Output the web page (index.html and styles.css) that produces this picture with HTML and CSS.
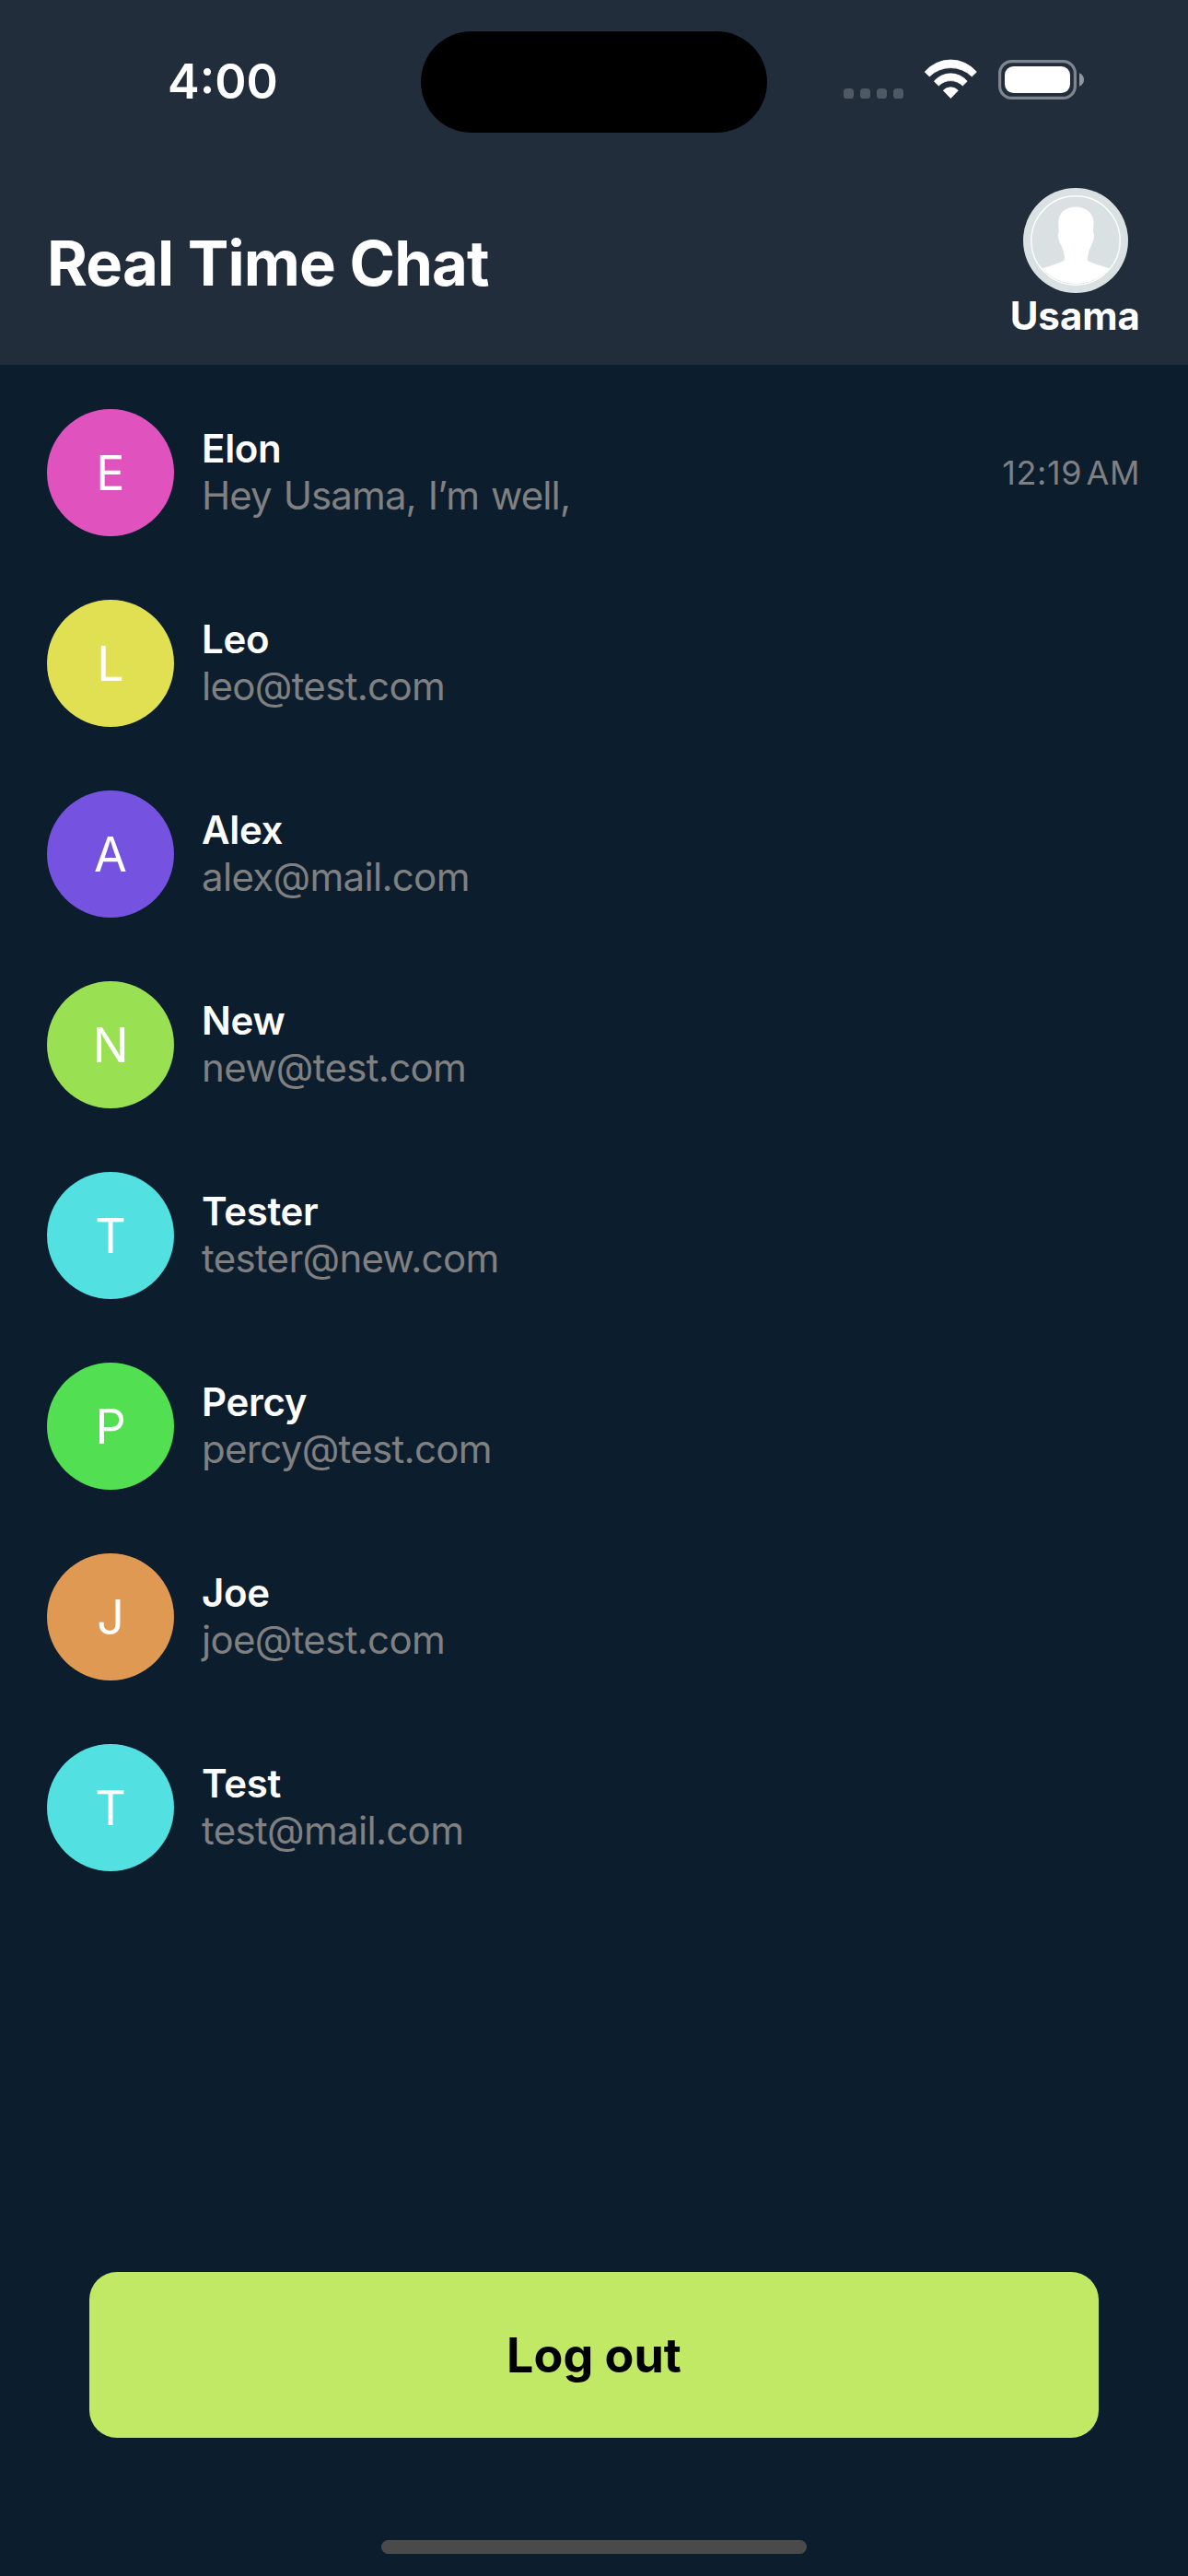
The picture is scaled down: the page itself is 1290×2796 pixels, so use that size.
FILE: index.html
```html
<!DOCTYPE html>
<html lang="en">
<head>
<meta charset="utf-8">
<title>Real Time Chat</title>
<link rel="stylesheet" href="styles.css">
</head>
<body>
<div class="screen">
  <header class="header">
    <div class="status">
      <span class="clock">4:00</span>
      <div class="island"></div>
      <div class="indicators">
        <svg class="signal" width="65" height="44" viewBox="0 0 65 44">
          <rect x="0" y="32" width="11" height="11" rx="3.6"/>
          <rect x="18" y="32" width="11" height="11" rx="3.6"/>
          <rect x="36" y="32" width="11" height="11" rx="3.6"/>
          <rect x="54" y="32" width="11" height="11" rx="3.6"/>
        </svg>
        <svg class="wifi" width="59" height="44" viewBox="0 0 59 44">
          <path d="M1.2 14.1A36.8 36.8 0 0 1 57.4 14.1L52.3 18.9A33 33 0 0 0 6.3 18.9Z"/>
          <path d="M11.4 24.2A23.4 23.4 0 0 1 47.2 24.2L42.3 29A18.4 18.4 0 0 0 16.3 29Z"/>
          <path d="M21.3 34.2A11 11 0 0 1 37.3 34.2L29.3 42.5Z"/>
        </svg>
        <svg class="battery" width="94" height="44" viewBox="0 0 94 44">
          <rect class="battery-case" x="1.6" y="2.6" width="81.8" height="39.8" rx="13"/>
          <path class="battery-cap" d="M88 15.3Q93 17.5 93 22.5T88 29.7Z"/>
          <rect class="battery-level" x="7" y="8" width="71" height="29" rx="9.5"/>
        </svg>
      </div>
    </div>
    <div class="toolbar">
      <h1 class="title">Real Time Chat</h1>
      <div class="profile">
        <svg class="portrait" width="114" height="114" viewBox="0 0 114 114">
          <circle class="portrait-bg" cx="57" cy="57" r="57"/>
          <circle class="portrait-ring" cx="57" cy="57" r="48.2"/>
          <path class="portrait-figure" d="M57.3 20.4C66 20.4 76.2 25.5 76.5 37C76.6 42 75.8 45.5 76.3 48.5C77.3 50.5 76.8 56 75.6 59C74 63.5 72.5 64.5 71 71C70 75 68.8 78.5 71.5 79.7C78 82.6 86 84.8 93.8 87.3A48.5 48.5 0 0 1 20.7 87.3C28.5 84.8 36 82.5 42.5 79.7C46 78.3 45 75 44.2 71C43 65 41 62.5 39.5 58.5C38 55 37.3 50.5 38.5 48.5C39 45.5 38 42 38.2 37C38.6 25.5 48 20.4 57.3 20.4Z"/>
        </svg>
        <span class="username">Usama</span>
      </div>
    </div>
  </header>

  <main class="chats">
    <div class="chat"><div class="avatar pink">E</div><div class="info"><div class="name">Elon</div><div class="detail message">Hey Usama, I’m well,</div></div><time class="time">12:19 AM</time></div>
    <div class="chat"><div class="avatar yellow">L</div><div class="info"><div class="name">Leo</div><div class="detail">leo@test.com</div></div></div>
    <div class="chat"><div class="avatar purple">A</div><div class="info"><div class="name">Alex</div><div class="detail">alex@mail.com</div></div></div>
    <div class="chat"><div class="avatar lime">N</div><div class="info"><div class="name">New</div><div class="detail">new@test.com</div></div></div>
    <div class="chat"><div class="avatar cyan">T</div><div class="info"><div class="name">Tester</div><div class="detail">tester@new.com</div></div></div>
    <div class="chat"><div class="avatar green">P</div><div class="info"><div class="name">Percy</div><div class="detail">percy@test.com</div></div></div>
    <div class="chat"><div class="avatar orange">J</div><div class="info"><div class="name">Joe</div><div class="detail">joe@test.com</div></div></div>
    <div class="chat"><div class="avatar cyan">T</div><div class="info"><div class="name">Test</div><div class="detail">test@mail.com</div></div></div>
  </main>

  <footer class="footer">
    <button class="logout">Log out</button>
    <div class="home-bar"></div>
  </footer>
</div>
</body>
</html>
```
FILE: styles.css
```css
* { box-sizing: border-box; }

body {
  margin: 0;
  background: #0c1d2e;
  color: #fff;
  font-family: Inter, "Liberation Sans", sans-serif;
}

.screen {
  display: flex;
  flex-direction: column;
  width: 1290px;
  height: 2796px;
}

.header {
  height: 396px;
  background: #222d3b;
}

.status {
  display: grid;
  grid-template-columns: 457px 376px 457px;
  align-items: center;
  height: 177px;
}

.clock {
  padding-left: 182px;
  font-size: 52px;
  font-weight: 600;
  line-height: 63px;
}

.island {
  align-self: start;
  height: 110px;
  margin-top: 34px;
  border-radius: 55px;
  background: #000;
}

.indicators {
  display: flex;
  gap: 22px;
  margin-bottom: 5px;
  padding-left: 83px;
}

.indicators svg { display: block; }
.signal { fill: #4f5963; }
.wifi { fill: #fff; stroke: #fff; stroke-width: 0.8; stroke-linejoin: round; }
.battery-case { fill: none; stroke: #7e858e; stroke-width: 3.2; }
.battery-cap { fill: #9197a0; }
.battery-level { fill: #fff; }

.toolbar {
  display: flex;
  align-items: center;
  justify-content: space-between;
  padding: 27px 52px 0 51px;
}

.title {
  margin: 0 0 2px;
  font-size: 67px;
  font-weight: 700;
  line-height: 81px;
  letter-spacing: -0.9px;
  word-spacing: 0.5px;
}

.profile {
  display: flex;
  flex-direction: column;
  align-items: center;
  height: 165px;
}

.portrait { display: block; margin-left: 1px; }
.portrait-bg { fill: #d9e1e2; }
.portrait-ring { fill: none; stroke: #fff; stroke-width: 1.4; }
.portrait-figure { fill: #fff; }

.username {
  margin-top: -1px;
  font-size: 42px;
  font-weight: 700;
  line-height: 51px;
}

.chats {
  display: flex;
  flex: 1;
  flex-direction: column;
  gap: 69px;
  padding: 48px 52px 0 51px;
}

.chat {
  display: flex;
  align-items: center;
  height: 138px;
}

.avatar {
  display: flex;
  align-items: center;
  justify-content: center;
  width: 138px;
  height: 138px;
  padding-top: 1px;
  border-radius: 50%;
  font-size: 52px;
  line-height: 63px;
}

.pink { background: #e052bd; }
.yellow { background: #e0e052; }
.purple { background: #7552e0; }
.lime { background: #99e052; }
.cyan { background: #52e0e0; }
.green { background: #52e052; }
.orange { background: #e09952; }

.info {
  flex: 1;
  padding: 0 0 2px 30px;
  font-size: 42px;
  line-height: 51px;
}

.name { font-weight: 600; letter-spacing: -0.3px; }
.detail { color: #808080; letter-spacing: -0.68px; }
.message { letter-spacing: -0.9px; word-spacing: 2px; }

.time {
  color: #808080;
  font-size: 36px;
  line-height: 44px;
  letter-spacing: 0.6px;
  word-spacing: -6.5px;
}

.footer {
  display: flex;
  flex-direction: column;
  align-items: center;
  justify-content: space-between;
  height: 330px;
  padding-bottom: 24px;
}

.logout {
  width: 1096px;
  height: 180px;
  padding: 1px 0 0;
  border: 0;
  border-radius: 30px;
  background: #c1e965;
  color: #000;
  font: 700 52px/63px Inter, "Liberation Sans", sans-serif;
}

.home-bar {
  width: 462px;
  height: 15px;
  border-radius: 7.5px;
  background: #4a4a4a;
}
```
